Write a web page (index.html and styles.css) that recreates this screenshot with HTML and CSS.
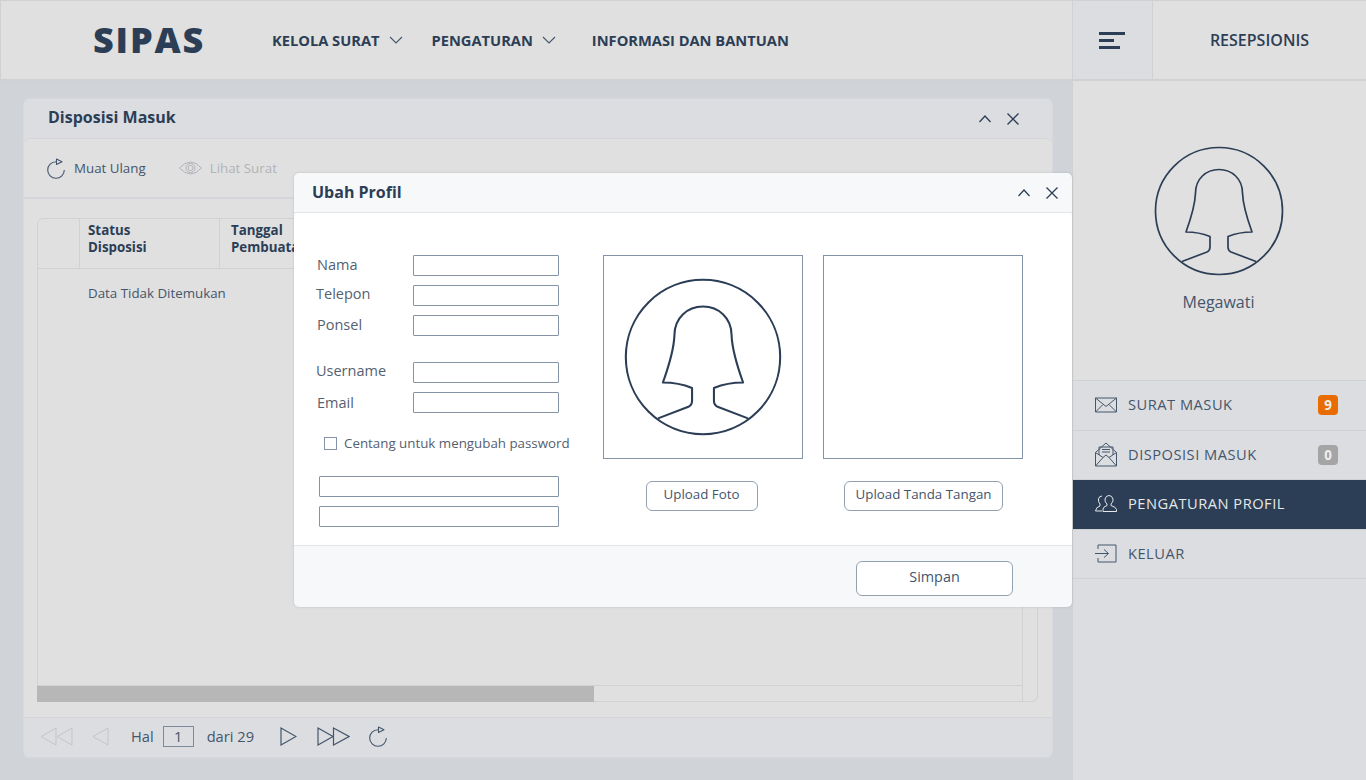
FILE: index.html
```html
<!DOCTYPE html>
<html>
  <head>
    <meta charset="UTF-8">
    <meta name="viewport" content="width=device-width,initial-scale=1">
    <title>SIPAS</title>
    <link rel="stylesheet" href="styles.css">
  </head>
  <body>
    <svg class="defs" width="0" height="0">
      <symbol id="avatar" viewBox="-65 -65 130 130">
        <circle cx="0" cy="0" r="63.5" fill="none" stroke="currentColor" stroke-width="1.700"/>
        <path d="M-37 50.5L-12 41Q-9 39.500 -9 36V25.500Q-20 21 -33 21Q-24 -4 -23.500 -18C-23.500 -32 -13 -41.500 0 -41.500S23.500 -32 23.500 -18Q24 -4 33 21Q20 21 9 25.500V36Q9 39.500 12 41L37 50.500" fill="none" stroke="currentColor" stroke-width="1.700" stroke-linejoin="round"/>
      </symbol>
      <symbol id="reload" viewBox="0 0 19 21">
        <path d="M9 3.700A8.300 8.300 0 1 0 17.300 12" fill="none" stroke="currentColor" stroke-width="1.100"/>
        <path d="M9.500 1L15 3.700L9.500 6.500Z" fill="none" stroke="currentColor" stroke-width="1.100" stroke-linejoin="round"/>
      </symbol>
    </svg>

    <header class="topbar">
      <div class="topbar-main">
        <div class="logo">SIPAS</div>
        <nav class="topnav">
          <a class="topnav-item">KELOLA SURAT
            <svg class="chev" width="14" height="8" viewBox="0 0 14 8"><path d="M1 1l6 6 6-6" fill="none" stroke="currentColor" stroke-width="1.100"/></svg>
          </a>
          <a class="topnav-item">PENGATURAN
            <svg class="chev" width="14" height="8" viewBox="0 0 14 8"><path d="M1 1l6 6 6-6" fill="none" stroke="currentColor" stroke-width="1.100"/></svg>
          </a>
          <a class="topnav-item topnav-last">INFORMASI DAN BANTUAN</a>
        </nav>
      </div>
      <div class="menu-btn"><span class="bar bar-long"></span><span class="bar bar-mid"></span><span class="bar bar-short"></span></div>
      <div class="role">RESEPSIONIS</div>
    </header>

    <div class="layout">
      <main class="content">
        <section class="panel">
          <div class="panel-head">
            <h2>Disposisi Masuk</h2>
            <div class="win-btns">
              <svg width="12" height="8" viewBox="0 0 12 8"><path d="M.5 7l5.500-6 5.500 6" fill="none" stroke="currentColor" stroke-width="1.300"/></svg>
              <svg width="12" height="12" viewBox="0 0 12 12"><path d="M.5.5l11 11M11.500.5l-11 11" fill="none" stroke="currentColor" stroke-width="1.300"/></svg>
            </div>
          </div>
          <div class="panel-card">
            <div class="toolbar">
              <span class="tool"><svg class="ico-reload" width="19" height="21"><use href="#reload"/></svg>Muat Ulang</span>
              <span class="tool tool-off">
                <svg width="23" height="14" viewBox="0 0 23 14"><path d="M.5 7Q11.500 -5 22.500 7Q11.500 19 .5 7Z" fill="none" stroke="currentColor"/><circle cx="11.500" cy="7" r="4.500" fill="none" stroke="currentColor"/><circle cx="11.500" cy="7" r="2.500" fill="none" stroke="currentColor"/></svg>
                Lihat Surat
              </span>
            </div>
            <div class="table-wrap">
              <div class="table">
                <div class="thead">
                  <div class="th th-blank"></div>
                  <div class="th th-status">Status<br>Disposisi</div>
                  <div class="th">Tanggal<br>Pembuatan</div>
                </div>
                <div class="tbody">Data Tidak Ditemukan</div>
                <div class="hscroll"><div class="hthumb"></div></div>
              </div>
              <div class="vscroll"></div>
            </div>
          </div>
          <div class="pager">
            <svg class="pg-off" width="33" height="19" viewBox="0 0 33 19"><path d="M16 1L1 9.500L16 18ZM32 1L17 9.500L32 18Z" fill="none" stroke="currentColor"/></svg>
            <svg class="pg-off pg-prev" width="17" height="19" viewBox="0 0 17 19"><path d="M16 1L1 9.500L16 18Z" fill="none" stroke="currentColor"/></svg>
            <span class="pg-hal">Hal</span>
            <span class="pg-num">1</span>
            <span class="pg-of">dari 29</span>
            <svg class="pg-next" width="17" height="19" viewBox="0 0 17 19"><path d="M1 1L16 9.500L1 18Z" fill="none" stroke="currentColor" stroke-width="1.200"/></svg>
            <svg class="pg-last" width="33" height="19" viewBox="0 0 33 19"><path d="M1 1L16 9.500L1 18ZM16.500 1L32 9.500L16.500 18Z" fill="none" stroke="currentColor" stroke-width="1.200"/></svg>
            <svg class="ico-reload pg-reload" width="19" height="21"><use href="#reload"/></svg>
          </div>
        </section>
      </main>

      <aside class="sidebar">
        <div class="profile">
          <svg class="profile-pic" width="130" height="130"><use href="#avatar"/></svg>
          <div class="profile-name">Megawati</div>
        </div>
        <ul class="side-menu">
          <li class="side-item">
            <svg width="22" height="16" viewBox="0 0 22 16"><path d="M.5 1h21v14H.5zM.5 1L11 9.500L21.500 1M.5 15L8 7.500M21.500 15L14 7.500" fill="none" stroke="currentColor"/></svg>
            <span class="side-label">SURAT MASUK</span><span class="badge badge-orange">9</span>
          </li>
          <li class="side-item">
            <svg width="22" height="25" viewBox="0 0 22 25"><path d="M.5 10.500V24h21V10.500L11 1zM.5 24L8 15.500L11 13L14 15.500L21.500 24M.5 10.500L8 15.500M21.500 10.500L14 15.500M4 13V5h14v8M7 7.500h8M7 10h8" fill="none" stroke="currentColor"/></svg>
            <span class="side-label">DISPOSISI MASUK</span><span class="badge badge-grey">0</span>
          </li>
          <li class="side-item side-active">
            <svg width="22" height="18" viewBox="0 0 22 18"><path d="M7 16H.5Q1 12 5 11V9Q3 7 3.500 4Q4 1 7 1M8 16.500V14Q8 12 12 10.500V9Q9.500 7 10 4Q11 .5 14 .5Q17 .5 18 4Q18.500 7 16 9V10.500Q21 12 21.500 14.500V16.500Z" fill="none" stroke="currentColor"/></svg>
            <span class="side-label">PENGATURAN PROFIL</span>
          </li>
          <li class="side-item">
            <svg width="22" height="19" viewBox="0 0 22 19"><path d="M3 5V1h18v17H3v-4M0 9.500h13M9 5.500l4.500 4-4.500 4" fill="none" stroke="currentColor"/></svg>
            <span class="side-label">KELUAR</span>
          </li>
        </ul>
      </aside>
    </div>

    <div class="modal">
      <div class="modal-head">
        <h2>Ubah Profil</h2>
        <div class="win-btns">
          <svg width="12" height="8" viewBox="0 0 12 8"><path d="M.5 7l5.500-6 5.500 6" fill="none" stroke="currentColor" stroke-width="1.300"/></svg>
          <svg width="12" height="12" viewBox="0 0 12 12"><path d="M.5.5l11 11M11.500.5l-11 11" fill="none" stroke="currentColor" stroke-width="1.300"/></svg>
        </div>
      </div>
      <div class="modal-body">
        <form class="form">
          <div class="group">
            <label class="row"><span>Nama</span><input type="text"></label>
            <label class="row"><span class="label-up">Telepon</span><input type="text"></label>
            <label class="row"><span>Ponsel</span><input type="text"></label>
          </div>
          <div class="group">
            <label class="row"><span class="label-up">Username</span><input type="text"></label>
            <label class="row"><span class="label-flat">Email</span><input type="text"></label>
          </div>
          <label class="check"><span class="check-box"></span>Centang untuk mengubah password</label>
          <div class="group pass">
            <input type="password">
            <input type="password">
          </div>
        </form>
        <div class="uploads">
          <div class="upload">
            <div class="upload-box"><svg class="upload-pic" width="158" height="158"><use href="#avatar"/></svg></div>
            <button type="button" class="btn btn-foto">Upload Foto</button>
          </div>
          <div class="upload">
            <div class="upload-box"></div>
            <button type="button" class="btn btn-ttd">Upload Tanda Tangan</button>
          </div>
        </div>
      </div>
      <div class="modal-foot">
        <button type="button" class="btn btn-save">Simpan</button>
      </div>
    </div>
  </body>
</html>
```

FILE: styles.css
```css
* {
  box-sizing: border-box;
}
html, body {
  height: 100%;
}
body {
  margin: 0;
  height: 780px;
  overflow: hidden;
  position: relative;
  background-color: #d0d3d8;
  font-family: 'Open Sans', sans-serif;
  color: #2c3e55;
}
h2 {
  margin: 0;
  padding-bottom: 2px;
  font-size: 16px;
  font-weight: 700;
}
.defs {
  position: absolute;
}

/* top bar */
.topbar {
  display: flex;
  height: 81px;
  background-color: #e0e0e0;
  border: 1px solid #d0d1d3;
  border-width: 1px 0 2px 1px;
}
.topbar-main {
  width: 1071px;
  display: flex;
  align-items: center;
  padding-left: 92px;
}
.logo {
  width: 179px;
  font-family: 'Open Sans', sans-serif;
  font-size: 36px;
  font-weight: 800;
  letter-spacing: 1.800px;
  line-height: 40px;
}
.topnav {
  display: flex;
  align-items: center;
  font-size: 14.670px;
  font-weight: 700;
}
.topnav-item {
  display: flex;
  align-items: center;
  margin-right: 23px;
}
.topnav-last {
  margin-left: 7px;
}
.chev {
  margin-left: 9px;
  margin-right: 6px;
  color: #44566c;
}
.menu-btn {
  width: 81px;
  background-color: #dcdde0;
  border-left: 1px solid #d0d1d3;
  border-right: 1px solid #d0d1d3;
  display: flex;
  flex-direction: column;
  justify-content: center;
  gap: 4px;
  padding-left: 26px;
}
.bar {
  display: block;
  height: 3px;
  background-color: #2c3e55;
}
.bar-long {
  width: 26px;
}
.bar-mid {
  width: 15px;
}
.bar-short {
  width: 21px;
}
.role {
  flex: 1;
  text-align: center;
  line-height: 78px;
  font-size: 16px;
  font-weight: 600;
}

.layout {
  display: flex;
  height: 699px;
}

/* main panel */
.content {
  width: 1072px;
  padding: 17px 19px 22px 23px;
}
.panel {
  height: 660px;
  display: flex;
  flex-direction: column;
  background-color: #dcdde0;
  border: 1px solid #d7d8db;
  border-radius: 6px;
}
.panel-head {
  height: 39px;
  flex: none;
  display: flex;
  align-items: center;
  justify-content: space-between;
  padding: 0 33px 0 24px;
}
.panel-head h2 {
  padding-bottom: 4px;
}
.win-btns {
  display: flex;
  align-items: center;
  gap: 16px;
}
.panel-card {
  flex: 1;
  display: flex;
  flex-direction: column;
  background-color: #e0e0e0;
  border-top: 1px solid #d3d5d8;
  border-bottom: 1px solid #d3d5d8;
  border-radius: 6px 6px 0 0;
}
.toolbar {
  height: 60px;
  flex: none;
  display: flex;
  align-items: center;
  gap: 33px;
  padding-left: 23px;
  border-bottom: 2px solid #d3d5d8;
  font-size: 13.330px;
  color: #44566c;
}
.tool {
  display: flex;
  align-items: center;
  gap: 8px;
}
.ico-reload {
  color: #44566c;
}
.tool-off {
  color: #b0b3b8;
}
.table-wrap {
  flex: 1;
  display: flex;
  margin: 19px 14px 15px 13px;
  border: 1px solid #cfd1d3;
  border-radius: 6px;
}
.table {
  flex: 1;
  min-width: 0;
  display: flex;
  flex-direction: column;
}
.thead {
  height: 50px;
  flex: none;
  display: flex;
  border-bottom: 1px solid #cfd1d3;
  font-size: 13.330px;
  font-weight: 700;
  line-height: 17px;
  overflow: hidden;
}
.th {
  padding: 3px 0 0 11px;
}
.th-blank {
  width: 42px;
  border-right: 1px solid #cfd1d3;
}
.th-status {
  width: 140px;
  padding-left: 8px;
  border-right: 1px solid #cfd1d3;
}
.tbody {
  flex: 1;
  padding: 15px 0 0 50px;
  font-size: 13.330px;
  color: #44566c;
}
.hscroll {
  height: 16px;
  flex: none;
  border-top: 1px solid #cfd1d3;
}
.hthumb {
  width: 557px;
  height: 16px;
  margin-left: -1px;
  background-color: #b7b7b7;
}
.vscroll {
  width: 15px;
  flex: none;
  border-left: 1px solid #cfd1d3;
}

/* pager */
.pager {
  height: 39px;
  flex: none;
  display: flex;
  align-items: center;
  padding: 0 0 3px 16px;
  font-size: 14.670px;
  color: #44566c;
}
.pg-off {
  color: #c3c5c8;
}
.pg-prev {
  margin-left: 19px;
}
.pg-hal {
  margin-left: 22px;
}
.pg-num {
  width: 31px;
  height: 21px;
  margin-left: 9px;
  border: 1px solid #7c8a9b;
  text-align: center;
  line-height: 19px;
}
.pg-of {
  margin-left: 13px;
}
.pg-next {
  margin-left: 26px;
}
.pg-last {
  margin-left: 20px;
}
.pg-reload {
  margin-left: 19px;
}

/* sidebar */
.sidebar {
  flex: 1;
  background-color: #dcdde0;
  border-left: 1px solid #d0d1d3;
}
.profile {
  height: 299px;
  background-color: #e0e0e0;
  display: flex;
  flex-direction: column;
  align-items: center;
  padding: 65px 2px 0 0;
  color: #2c3e55;
}
.profile-name {
  margin-top: 15px;
  font-size: 16px;
  color: #44566c;
}
.side-menu {
  margin: 0;
  padding: 0;
  list-style: none;
  border-top: 1px solid #cfd1d3;
}
.side-item {
  height: 49.500px;
  display: flex;
  align-items: center;
  padding: 0 28px 0 22px;
  border-bottom: 1px solid #cfd1d3;
  font-size: 14.670px;
  letter-spacing: .5px;
  color: #44566c;
}
.side-item svg {
  flex: none;
  color: #44566c;
}
.side-label {
  flex: 1;
  margin-left: 11px;
  padding-bottom: 2px;
}
.side-active {
  background-color: #2c3e55;
  color: #e6e8ea;
}
.side-item.side-active svg {
  color: #e6e8ea;
}
.badge {
  width: 20px;
  height: 20px;
  border-radius: 4px;
  color: #eee;
  font-size: 13.330px;
  font-weight: 700;
  text-align: center;
  line-height: 20px;
  letter-spacing: 0;
}
.badge-orange {
  background-color: #e86c00;
}
.badge-grey {
  background-color: #a5a5a5;
}

/* modal */
.modal {
  position: absolute;
  left: 294px;
  top: 173px;
  width: 778px;
  height: 434px;
  display: flex;
  flex-direction: column;
  background-color: #f7f8fa;
  border-radius: 5px;
  box-shadow: 0 0 3px #0002;
}
.modal-head {
  height: 40px;
  flex: none;
  display: flex;
  align-items: center;
  justify-content: space-between;
  padding: 0 14px 0 18px;
  border-bottom: 1px solid #e3e5e8;
}
.modal-body {
  height: 333px;
  flex: none;
  display: flex;
  padding: 42px 0 0 23px;
  background-color: #fff;
  border-bottom: 1px solid #e3e5e8;
  border-radius: 5px 5px 0 0;
  font-size: 14px;
  color: #55616f;
}
.form {
  width: 286px;
  flex: none;
  font-size: 14.500px;
}
.group {
  display: flex;
  flex-direction: column;
  gap: 9px;
  width: 242px;
}
.group + .group {
  margin-top: 26px;
}
.row {
  height: 21px;
  display: flex;
  align-items: center;
  justify-content: space-between;
}
.row span {
  padding-bottom: 2px;
}
.row .label-up {
  padding-bottom: 4px;
  margin-left: -1px;
}
.row .label-flat {
  padding-bottom: 0;
}
input[type="text"], input[type="password"] {
  height: 21px;
  border: 1px solid #8493a5;
  border-radius: 1px;
  outline: none;
  background-color: #fff;
  padding: 0;
}
.row input {
  width: 146px;
}
.check {
  display: flex;
  align-items: center;
  gap: 7px;
  margin: 21px 0 0 7px;
  font-size: 13.330px;
  white-space: nowrap;
}
.check-box {
  width: 13px;
  height: 13px;
  border: 1px solid #8493a5;
}
.group.pass {
  margin-top: 24px;
  padding-left: 2px;
}
.pass input {
  width: 240px;
}
.uploads {
  display: flex;
  gap: 20px;
}
.upload {
  width: 200px;
  display: flex;
  flex-direction: column;
  align-items: center;
}
.upload-box {
  width: 200px;
  height: 204px;
  display: flex;
  align-items: center;
  justify-content: center;
  border: 1px solid #8493a5;
  color: #2c3e55;
}
.btn {
  height: 30px;
  margin-top: 22px;
  padding: 0 0 5px;
  background-color: #fff;
  border: 1px solid #94a1b0;
  border-radius: 6px;
  font-family: 'Open Sans', sans-serif;
  font-size: 13.330px;
  color: #44566c;
}
.btn-foto {
  width: 112px;
  margin-left: -3px;
}
.btn-ttd {
  width: 159px;
  margin-left: 1px;
}
.modal-foot {
  flex: 1;
  display: flex;
  justify-content: flex-end;
  align-items: flex-start;
  padding: 15px 59px 0 0;
}
.btn-save {
  width: 157px;
  height: 35px;
  margin-top: 0;
  font-size: 14.400px;
}
```
